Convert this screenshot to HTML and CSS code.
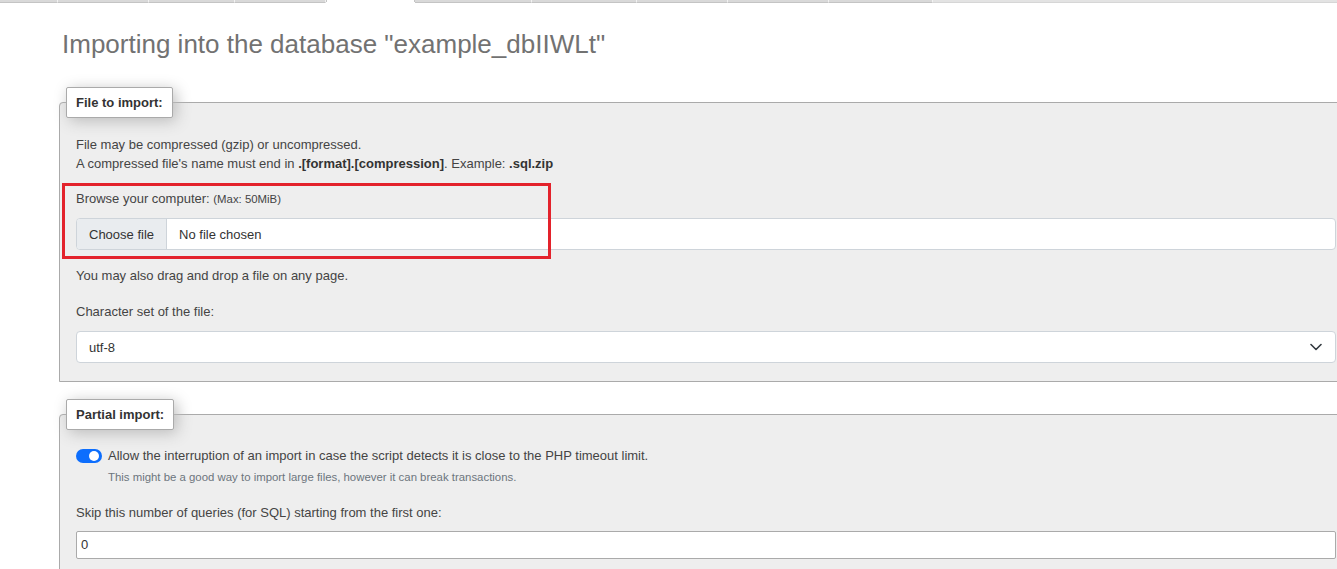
FILE: index.html
```html
<!DOCTYPE html>
<html lang="en">
<head>
<meta charset="utf-8">
<title>Import</title>
<link rel="stylesheet" href="styles.css">
</head>
<body>
<div class="tabs">
  <span class="tab t1"></span>
  <span class="tab t2"></span>
  <span class="tab t3"></span>
  <span class="tab t4"></span>
  <span class="tab active"></span>
  <span class="tab t6"></span>
  <span class="tab t7"></span>
  <span class="tab t8"></span>
  <span class="tab t9"></span>
  <span class="tab t10"></span>
  <span class="tab rest"></span>
</div>
<main class="page">
  <h2 class="title">Importing into the database "example_dbIIWLt"</h2>

  <fieldset class="box first">
    <legend class="box-legend">File to import:</legend>
    <div class="box-body">
      <p class="note">File may be compressed (gzip) or uncompressed.<br>A compressed file's name must end in <b>.[format].[compression]</b>. Example: <b>.sql.zip</b></p>
      <div class="group upload">
        <div class="label">Browse your computer: <small class="max">(Max: 50MiB)</small></div>
        <div class="file-input">
          <span class="file-btn">Choose file</span>
          <span class="file-name">No file chosen</span>
        </div>
        <div class="highlight"></div>
      </div>
      <p class="plain">You may also drag and drop a file on any page.</p>
      <div class="group">
        <div class="label">Character set of the file:</div>
        <div class="select">
          <span>utf-8</span>
          <svg class="chev" width="12" height="8" viewBox="0 0 12 8"><path d="M1 1.5l5 5 5-5" fill="none" stroke="#343a40" stroke-width="1.6" stroke-linecap="round" stroke-linejoin="round"/></svg>
        </div>
      </div>
    </div>
  </fieldset>

  <fieldset class="box second">
    <legend class="box-legend">Partial import:</legend>
    <div class="box-body">
      <div class="switch-row">
        <span class="switch"><span class="knob"></span></span>
        <span>Allow the interruption of an import in case the script detects it is close to the PHP timeout limit.</span>
      </div>
      <div class="hint">This might be a good way to import large files, however it can break transactions.</div>
      <div class="group skip">
        <div class="label">Skip this number of queries (for SQL) starting from the first one:</div>
        <div class="num-input">0</div>
      </div>
    </div>
  </fieldset>
</main>
</body>
</html>
```

FILE: styles.css
```css
html, body {
  margin: 0;
  padding: 0;
  background: #fff;
  overflow: hidden;
}
body {
  font-family: "Liberation Sans", Arial, sans-serif;
  font-size: 13px;
  color: #444;
  width: 1337px;
  height: 569px;
}
.tabs {
  display: flex;
  height: 3px;
}
.tab {
  height: 2px;
  background: #d9d9d9;
  border-bottom: 1px solid #c4c4c4;
  border-right: 1px solid #f2f2f2;
}
.t1 { width: 57px; }
.t2 { width: 90px; }
.t3 { width: 85px; }
.t4 { width: 90px; }
.active {
  width: 87px;
  background: #fff;
  border-bottom: none;
  border-left: 1px solid #c4c4c4;
  border-right: 1px solid #c4c4c4;
}
.t6 { width: 116px; }
.t7 { width: 104px; }
.t8 { width: 90px; }
.t9 { width: 100px; }
.t10 { width: 103px; }
.rest { flex: 1; background: #e3e3e3; border-bottom-color: #d6d6d6; border-right: none; }

.page {
  padding: 26px 0 0 59px;
}
.title {
  margin: 0 0 0 3px;
  font-size: 26px;
  line-height: 30px;
  font-weight: normal;
  color: #727272;
}
.box {
  margin: 28px 0 0 0;
  width: 1294px;
  box-sizing: border-box;
  border: 1px solid #aaa;
  border-radius: 4px 4px 0 0;
  background: #eee;
  padding: 17px 6px 16px 6px;
  min-width: 0;
}
.first {
  padding-bottom: 18px;
}
.second {
  margin-top: 17px;
  padding-top: 16px;
}
.box-legend {
  background: #fff;
  border: 1px solid #aaa;
  border-radius: 2px;
  padding: 5px 9px;
  font-weight: bold;
  color: #333;
  line-height: 19px;
  box-shadow: 3px 3px 15px #bbb;
}
.box-body {
  padding: 0 10px;
  line-height: 19px;
}
.note {
  margin: 0;
}
.note b { color: #333; }
.group {
  margin-top: 17px;
}
.upload {
  position: relative;
  margin-top: 16px;
}
.label {
  margin-bottom: 9px;
}
.max {
  font-size: 11.4px;
}
.file-input {
  display: flex;
  height: 32px;
  box-sizing: border-box;
  border: 1px solid #ced4da;
  border-radius: 4px;
  background: #fff;
  align-items: stretch;
  overflow: hidden;
}
.file-btn {
  display: flex;
  align-items: center;
  padding: 0 12px;
  background: #e9ecef;
  border-right: 1px solid #ced4da;
  color: #333;
}
.file-name {
  display: flex;
  align-items: center;
  padding-left: 12px;
  color: #333;
}
.highlight {
  position: absolute;
  left: -14px;
  top: -6px;
  width: 489px;
  height: 76px;
  box-sizing: border-box;
  border: 3px solid #e3222b;
}
.plain {
  margin: 16px 0 0 0;
}
.plain + .group {
  margin-top: 17px;
}
.plain + .group .label {
  margin-bottom: 10px;
}
.select {
  display: flex;
  align-items: center;
  justify-content: space-between;
  height: 32px;
  box-sizing: border-box;
  border: 1px solid #ced4da;
  border-radius: 4px;
  background: #fff;
  padding: 0 13px 0 12px;
  color: #333;
}
.chev {
  display: block;
}
.switch-row {
  display: flex;
  align-items: center;
  gap: 6px;
}
.switch {
  position: relative;
  width: 26px;
  height: 14px;
  border-radius: 7px;
  background: #0d6efd;
  flex: none;
}
.knob {
  position: absolute;
  right: 3px;
  top: 2px;
  width: 10px;
  height: 10px;
  border-radius: 50%;
  background: #fff;
}
.hint {
  margin: 4px 0 0 32px;
  font-size: 11.4px;
  line-height: 17px;
  color: #6c757d;
}
.skip {
  margin-top: 17px;
}
.skip .label {
  margin-bottom: 9px;
}
.num-input {
  height: 28px;
  box-sizing: border-box;
  border: 1px solid #aaa;
  border-radius: 2px;
  background: #fff;
  padding: 0 4px;
  line-height: 26px;
  color: #333;
}
```
